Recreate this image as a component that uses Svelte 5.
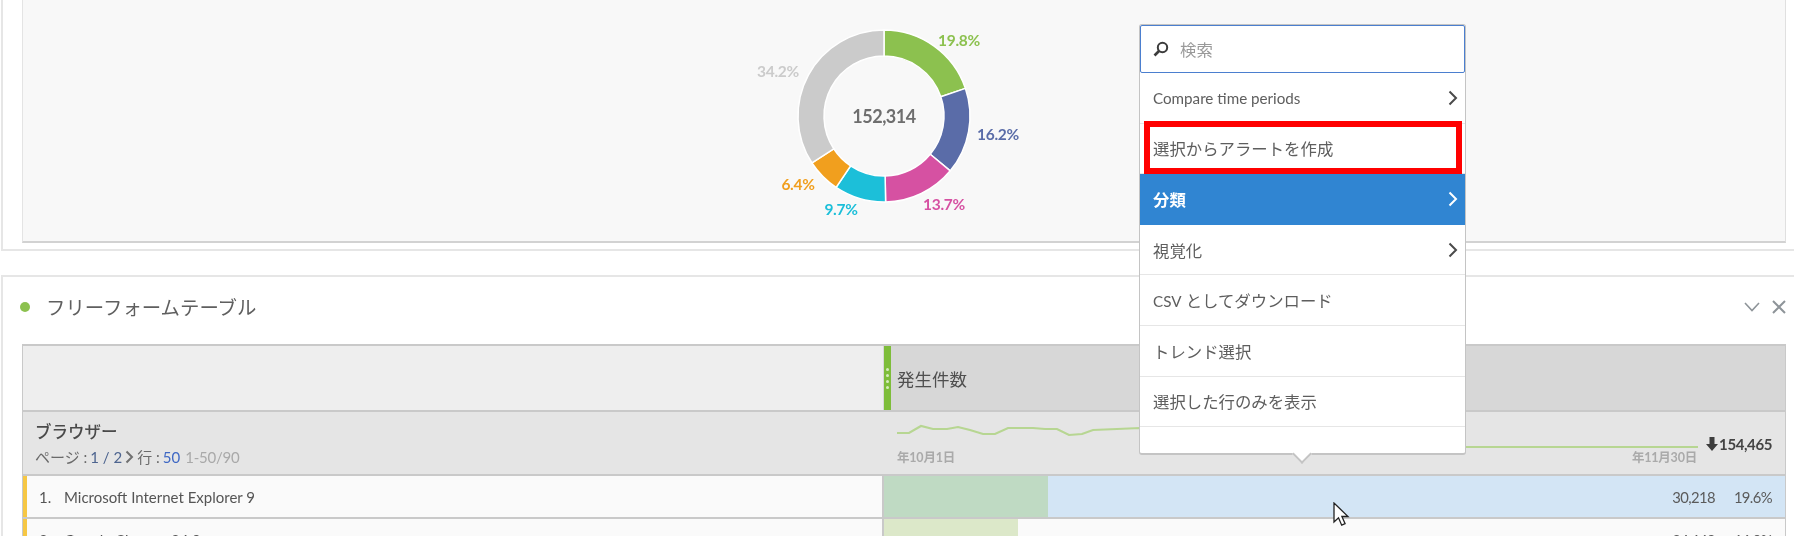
<script>
  const segments = [
    { pct: 19.8, color: '#8cc14f', lx: 959, ly: 40 },
    { pct: 16.2, color: '#5a6ca8', lx: 998, ly: 134 },
    { pct: 13.7, color: '#d651a2', lx: 944, ly: 204 },
    { pct: 9.7, color: '#1cbfd9', lx: 841, ly: 209 },
    { pct: 6.4, color: '#f19f1e', lx: 798, ly: 184 },
    { pct: 34.2, color: '#cbcbcb', lx: 778, ly: 71 },
  ]

  const CX = 884
  const CY = 116
  const R_OUT = 86
  const R_IN = 60

  function point(r, turn) {
    const a = turn * Math.PI * 2
    return `${(CX + r * Math.sin(a)).toFixed(2)} ${(CY - r * Math.cos(a)).toFixed(2)}`
  }

  function arc(from, to) {
    const large = to - from > 0.5 ? 1 : 0
    return `M${point(R_OUT, from)} A${R_OUT} ${R_OUT} 0 ${large} 1 ${point(R_OUT, to)} L${point(R_IN, to)} A${R_IN} ${R_IN} 0 ${large} 0 ${point(R_IN, from)} Z`
  }

  let acc = 0
  const slices = segments.map((s) => {
    const from = acc
    acc += s.pct / 100
    return { ...s, d: arc(from, acc) }
  })

  const menuItems = [
    { label: 'Compare time periods', more: true, latin: true },
    { label: '選択からアラートを作成' },
    { label: '分類', more: true, active: true },
    { label: '視覚化', more: true },
    { prefix: 'CSV', label: ' としてダウンロード' },
    { label: 'トレンド選択' },
    { label: '選択した行のみを表示' },
  ]

  const rows = [
    { n: '1.', name: 'Microsoft Internet Explorer 9', value: '30,218', pct: '19.6%', bar: 18.2, selected: true },
    { n: '2.', name: 'Google Chrome 34.0', value: '24,649', pct: '16.0%', bar: 14.9 },
  ]

  const spark =
    '897,433 909,433 921,426 933,429 947,429 958,427 970,430 983,434 995,434 1008,428 1033,428 1045,429 1057,429 1069,435 1082,434 1093,430 1117,429 1140,428 1300,440 1467,447 1698,447'
</script>

<div class="page">
  <section class="panel chart-panel">
    <div class="chart-box">
      <svg class="donut" viewBox="22 0 1764 241" width="1764" height="241" aria-label="donut chart">
        {#each slices as s}
          <path d={s.d} fill={s.color} stroke="#fff" stroke-width="1.5" />
          <text x={s.lx} y={s.ly} fill={s.color} text-anchor="middle" dominant-baseline="central" class="slice-label">{s.pct}%</text>
        {/each}
        <text x={CX} y={CY} text-anchor="middle" dominant-baseline="central" class="total">152,314</text>
      </svg>
    </div>
  </section>

  <section class="panel table-panel">
    <header class="panel-head">
      <span class="dot"></span>
      <h2>フリーフォームテーブル</h2>
      <span class="head-icons">
        <svg width="16" height="10" viewBox="0 0 16 10"><path d="M1 1l7 7.5L15 1" fill="none" stroke="#8e9499" stroke-width="1.6" /></svg>
        <svg width="14" height="14" viewBox="0 0 14 14"><path d="M1 1l12 12M13 1L1 13" fill="none" stroke="#8e9499" stroke-width="2" /></svg>
      </span>
    </header>

    <div class="table">
      <div class="head-row">
        <div class="dim-col"></div>
        <div class="metric-col metric-title">
          <span class="grip"><i></i><i></i><i></i><i></i></span>
          <span>発生件数</span>
        </div>
      </div>

      <div class="sub-row">
        <div class="dim-col dim-info">
          <strong>ブラウザー</strong>
          <div class="pager">
            ページ : <b>1 / 2</b>
            <svg width="9" height="14" viewBox="0 0 9 14"><path d="M1.5 1.5L7 7l-5.5 5.5" fill="none" stroke="#707070" stroke-width="2" /></svg>
            行 :<b class="strong-blue">50</b> <em>1-50/90</em>
          </div>
        </div>
        <div class="metric-col spark-cell">
          <svg class="spark" width="903" height="62" viewBox="883 412 903 62">
            <polyline points={spark} fill="none" stroke="#b7d692" stroke-width="2.2" />
          </svg>
          <div class="dates"><span>年10月1日</span><span>年11月30日</span></div>
          <div class="total-cell">
            <svg width="12" height="14" viewBox="0 0 12 14"><path d="M3.5 0h5v7H12L6 14 0 7h3.5z" fill="#3d3d3d" /></svg>
            154,465
          </div>
        </div>
      </div>

      {#each rows as r}
        <div class="row">
          <div class="dim-col row-name">
            <span class="num">{r.n}</span>{r.name}
          </div>
          <div class="metric-col row-value" class:selected={r.selected}>
            <span class="bar" class:strong={r.selected} style:width="{r.bar}%"></span>
            <span class="val">{r.value}</span>
            <span class="share">{r.pct}</span>
          </div>
        </div>
      {/each}
    </div>
  </section>

  <div class="menu">
    <div class="search">
      <svg width="16" height="16" viewBox="0 0 16 16"><circle cx="9.5" cy="6.5" r="4.7" fill="none" stroke="#3c3c3c" stroke-width="2" /><path d="M6 10l-4.5 4.5" stroke="#3c3c3c" stroke-width="2.6" /></svg>
      <span>検索</span>
    </div>
    {#each menuItems as item}
      <div class="item" class:active={item.active} class:latin={item.latin}>
        <span>{#if item.prefix}<span class="prefix">{item.prefix}</span>{/if}{item.label}</span>
        {#if item.more}
          <svg width="10" height="16" viewBox="0 0 10 16"><path d="M1.5 1.5L8 8l-6.5 6.5" fill="none" stroke="currentColor" stroke-width="2" /></svg>
        {/if}
      </div>
    {/each}
    <span class="highlight"></span>
    <span class="tip"></span>
  </div>

  <svg class="cursor" width="18" height="26" viewBox="0 0 18 26">
    <path d="M1 1v19l4.5-4.2 3.2 7.4 3.4-1.5-3.2-7.2H15z" fill="#fff" stroke="#222" stroke-width="1.3" />
  </svg>
</div>

<style>
  :global(body) {
    margin: 0;
    background: #fff;
  }

  .page {
    position: relative;
    width: 1794px;
    height: 536px;
    overflow: hidden;
    background: #fff;
    font-family: Lato, 'Noto Sans CJK JP', sans-serif;
    color: #555;
    filter: blur(0.35px);
  }

  .panel {
    margin-left: 1px;
    border-left: 2px solid #e6e6e6;
    background: #fff;
  }

  .chart-panel {
    height: 249px;
    border-bottom: 2px solid #e6e6e6;
    padding-left: 19px;
  }

  .chart-box {
    width: 1762px;
    height: 241px;
    background: #f8f8f8;
    border-left: 1px solid #e4e4e4;
    border-right: 1px solid #e0e0e0;
    border-bottom: 2px solid #d2d2d2;
    overflow: hidden;
  }

  .donut {
    display: block;
    margin-left: -1px;
  }

  .slice-label {
    font-size: 15.5px;
    font-weight: 700;
    letter-spacing: -0.3px;
  }

  .total {
    font-size: 18px;
    font-weight: 700;
    letter-spacing: -0.5px;
    fill: #6e6e6e;
  }

  .table-panel {
    margin-top: 24px;
    border-top: 2px solid #e6e6e6;
    padding-left: 19px;
    height: 260px;
  }

  .panel-head {
    display: flex;
    align-items: center;
    height: 67px;
    width: 1764px;
    padding-bottom: 8px;
    box-sizing: border-box;
  }

  .dot {
    width: 10px;
    height: 10px;
    margin-left: -2px;
    border-radius: 50%;
    background: #8cc14f;
  }

  h2 {
    margin: 0 0 0 16px;
    font-size: 19.4px;
    font-weight: 400;
    color: #5f5f5f;
  }

  .head-icons {
    margin-left: auto;
    display: flex;
    align-items: center;
    gap: 12px;
  }

  .table {
    width: 1764px;
    border-top: 2px solid #c9c9c9;
    border-left: 1px solid #c9c9c9;
    border-right: 1px solid #c9c9c9;
    box-sizing: border-box;
  }

  .head-row,
  .sub-row,
  .row {
    display: grid;
    grid-template-columns: 860px 1fr;
  }

  .head-row {
    height: 64px;
    background: #eeeeee;
    border-bottom: 2px solid #c9c9c9;
  }

  .metric-title {
    display: flex;
    align-items: center;
    gap: 6px;
    background: #d7d7d7;
    font-size: 17.5px;
    color: #4f4f4f;
  }

  .grip {
    display: flex;
    flex-direction: column;
    justify-content: center;
    gap: 3px;
    align-self: stretch;
    width: 7px;
    align-items: center;
    margin-left: 1px;
    background: #7ebd3a;
  }

  .grip i {
    width: 3px;
    height: 3px;
    border-radius: 50%;
    background: #d6ecbe;
  }

  .sub-row {
    height: 62px;
    background: #e5e5e5;
    border-bottom: 2px solid #c9c9c9;
  }

  .dim-info {
    padding: 9px 0 0 12px;
  }

  .dim-info strong {
    display: block;
    font-size: 16.5px;
    font-weight: 500;
    line-height: 22px;
    color: #4a4a4a;
  }

  .pager {
    display: flex;
    align-items: center;
    gap: 3px;
    margin-top: 4px;
    font-size: 15px;
    line-height: 20px;
    color: #6a6a6a;
  }

  .pager b {
    font-weight: 400;
    color: #4d648f;
  }

  .pager .strong-blue {
    color: #3f68c4;
  }

  .pager em {
    font-style: normal;
    margin-left: 2px;
    color: #a9a9a9;
    letter-spacing: -0.2px;
  }

  .spark-cell {
    position: relative;
  }

  .spark {
    position: absolute;
    left: 0;
    top: 0;
  }

  .dates {
    position: absolute;
    left: 14px;
    right: 88px;
    top: 35px;
    display: flex;
    justify-content: space-between;
    font-size: 12.5px;
    font-weight: 700;
    letter-spacing: -0.2px;
    color: #aaa;
  }

  .total-cell {
    position: absolute;
    right: 13px;
    top: 23px;
    display: flex;
    align-items: center;
    gap: 1px;
    font-size: 15px;
    font-weight: 700;
    letter-spacing: -0.4px;
    color: #444;
  }

  .row {
    height: 41px;
    background: #fafafa;
    border-bottom: 2px solid #c9c9c9;
  }

  .row-name {
    position: relative;
    display: flex;
    align-items: center;
    padding-left: 16px;
    font-size: 15px;
    color: #555;
    box-shadow: inset 4px 0 0 #f6c744;
  }

  .num {
    width: 25px;
  }

  .row-value {
    position: relative;
    display: flex;
    align-items: center;
    justify-content: flex-end;
    padding-right: 13px;
    font-size: 14.8px;
    letter-spacing: -0.6px;
    color: #5a5a5a;
    border-left: 2px solid #c9c9c9;
    margin-left: -1px;
  }

  .row-value.selected {
    background: #d3e5f5;
  }

  .bar {
    position: absolute;
    left: 0;
    top: 0;
    bottom: 0;
    background: #dce8c9;
  }

  .bar.strong {
    background: #bfdac3;
  }

  .val,
  .share {
    position: relative;
  }

  .share {
    margin-left: 19px;
  }

  .menu {
    position: absolute;
    left: 1139px;
    top: 24px;
    width: 327px;
    height: 431px;
    box-sizing: border-box;
    background: #fff;
    border: 1px solid #c4c4c4;
    border-bottom-width: 2px;
    border-radius: 3px;
  }

  .search {
    display: flex;
    align-items: center;
    gap: 11px;
    height: 48px;
    box-sizing: border-box;
    padding-left: 12px;
    border: 1.5px solid #4b7fcf;
    border-radius: 2px;
    font-size: 16.4px;
    color: #9a9a9a;
  }

  .item {
    display: flex;
    align-items: center;
    justify-content: space-between;
    height: 50.6px;
    box-sizing: border-box;
    padding: 0 7px 0 13px;
    border-bottom: 1px solid #e6e6e6;
    font-size: 16.4px;
    color: #5e5e5e;
  }

  .item.latin,
  .prefix {
    font-size: 15.2px;
  }

  .item svg {
    color: #4a4a4a;
  }

  .item.active {
    background: #3085d2;
    color: #fff;
    font-weight: 700;
    border-bottom: 0;
  }

  .item.active svg {
    color: #fff;
  }

  .highlight {
    position: absolute;
    left: 4px;
    top: 96px;
    width: 318px;
    height: 53px;
    box-sizing: border-box;
    border: 6px solid #ff0000;
  }

  .tip {
    position: absolute;
    left: 155px;
    bottom: -8px;
    width: 14px;
    height: 14px;
    box-sizing: border-box;
    background: #fff;
    border-right: 2px solid #c4c4c4;
    border-bottom: 2px solid #c4c4c4;
    transform: rotate(45deg);
  }

  .cursor {
    position: absolute;
    left: 1333px;
    top: 502px;
  }
</style>
